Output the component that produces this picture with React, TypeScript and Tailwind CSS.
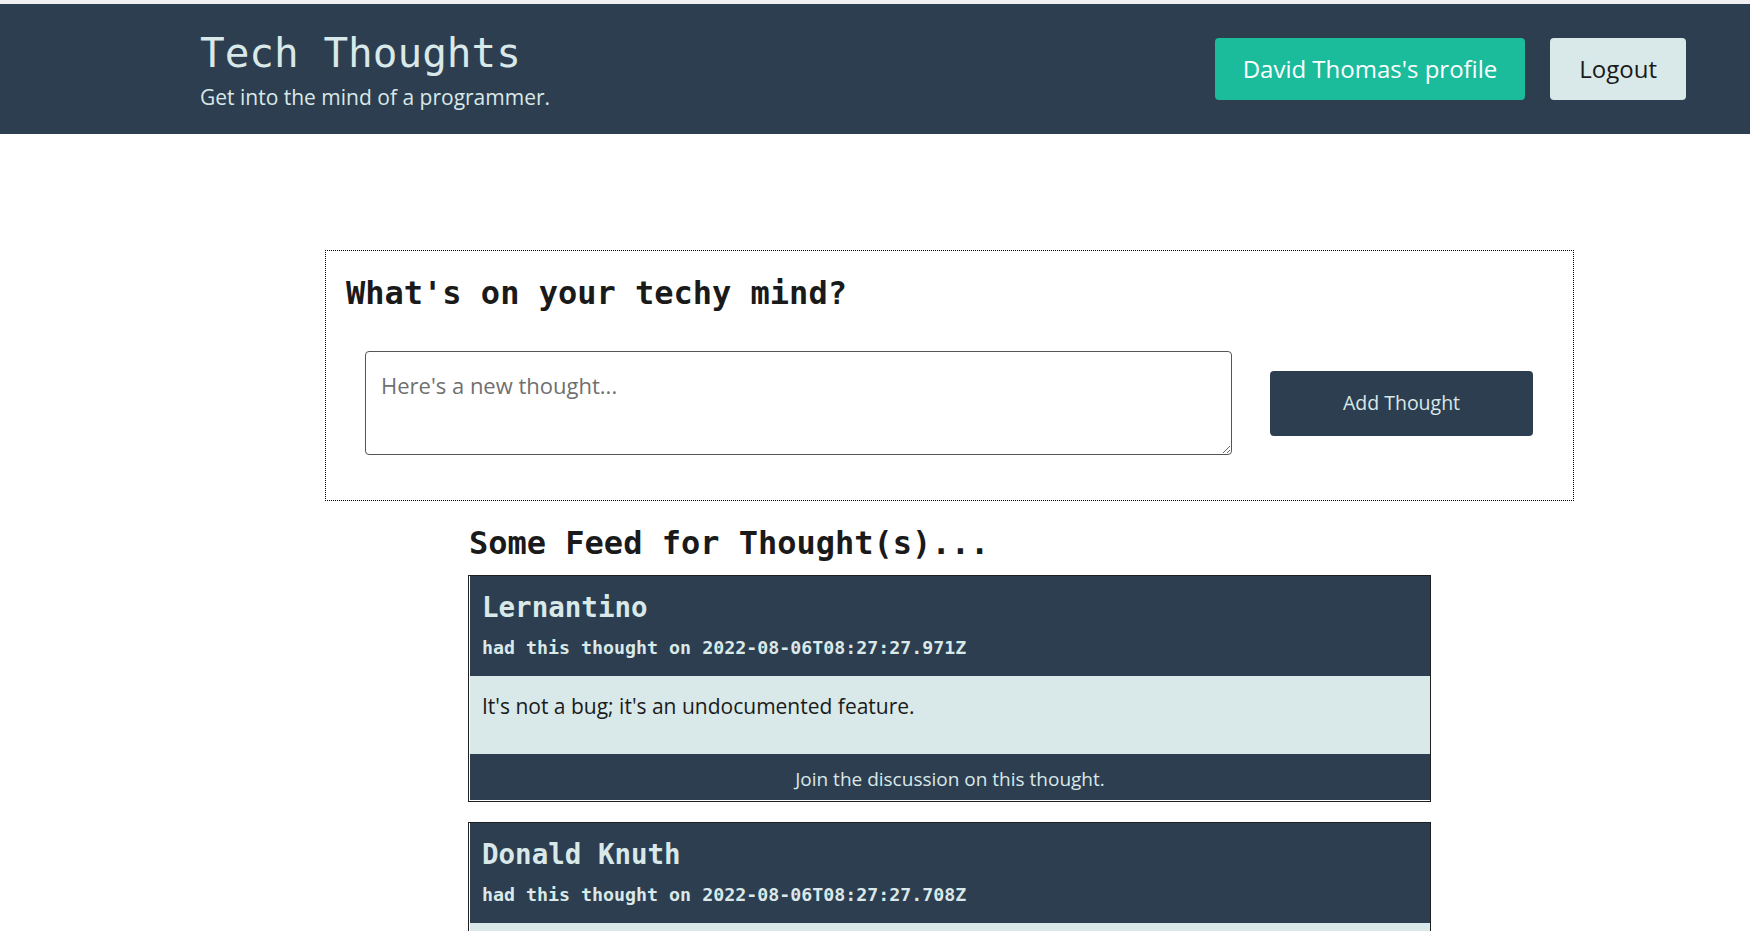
const mono = { fontFamily: '"DejaVu Sans Mono", "Liberation Mono", monospace' }

const thoughts = [
  {
    username: 'Lernantino',
    createdAt: '2022-08-06T08:27:27.971Z',
    text: "It's not a bug; it's an undocumented feature.",
  },
  {
    username: 'Donald Knuth',
    createdAt: '2022-08-06T08:27:27.708Z',
    text: 'Premature optimization is the root of all evil.',
  },
]

const Header = () => {
  return (
    <header className="h-[130px] bg-[#2d3e50] flex items-center justify-between pl-[200px] pr-[64px]">
      <div className="flex flex-col pt-[2px]">
        <h1 className="text-[41px] leading-[48px] text-[#d9e8e8]" style={mono}>
          Tech Thoughts
        </h1>
        <p className="text-[21px] leading-[28px] mt-[6px] text-[#d9e8e8]">Get into the mind of a programmer.</p>
      </div>
      <div className="flex items-center gap-[25px]">
        <button className="h-[62px] px-[28px] rounded bg-[#1abc9c] text-white text-[24px]">
          David Thomas's profile
        </button>
        <button className="h-[62px] px-[29px] rounded bg-[#d9e8e8] text-[#1a1a1a] text-[24px]">
          Logout
        </button>
      </div>
    </header>
  )
}

const ThoughtForm = () => {
  return (
    <div className="ml-[325px] w-[1249px] border border-dotted border-black pl-[20px] pr-[40px] pt-[22px] pb-[45px]">
      <h3 className="text-[32px] leading-[40px] font-bold text-[#1a1a1a]" style={mono}>
        What's on your techy mind?
      </h3>
      <div className="flex items-center mt-[38px] pl-[19px]">
        <textarea
          placeholder="Here's a new thought..."
          className="w-[867px] h-[104px] border border-[#555] rounded px-[15px] py-[18px] text-[22px] leading-[30px] text-[#222] placeholder:text-[#6f6f6f] outline-none"
        />
        <button className="ml-[38px] w-[263px] h-[65px] rounded bg-[#2d3e50] text-[#d9e8e8] text-[19.5px]">
          Add Thought
        </button>
      </div>
    </div>
  )
}

const ThoughtCard = ({ username, createdAt, text }: { username: string; createdAt: string; text: string }) => {
  return (
    <div className="w-[963px] border border-[#1f1f1f] bg-white pl-px pb-px mb-[20px]">
      <div className="bg-[#2d3e50] text-[#d9e8e8] px-3 pt-[14px] pb-4" style={mono}>
        <p className="text-[27.5px] leading-[34px] font-bold">{username}</p>
        <p className="text-[18.3px] leading-6 font-bold mt-3">had this thought on {createdAt}</p>
      </div>
      <div className="bg-[#d9e8e8] px-3 pt-[15px] pb-[33px] text-[21px] leading-[30px] text-[#1a1a1a]">{text}</div>
      <div className="bg-[#2d3e50] text-[#d9e8e8] text-center text-[19px] leading-[26px] pt-[12px] pb-[8px]">
        Join the discussion on this thought.
      </div>
    </div>
  )
}

const App = () => {
  return (
    <div className="min-h-screen bg-white" style={{ fontFamily: '"Open Sans", "Noto Sans", sans-serif' }}>
      <div className="h-1 bg-[#f0f0f0]" />
      <Header />
      <main className="pt-[116px] pb-10">
        <ThoughtForm />
        <div className="ml-[468px] mt-[22px]">
          <h3 className="text-[32px] leading-[40px] font-bold text-[#1a1a1a] pl-px mb-[12px]" style={mono}>
            Some Feed for Thought(s)...
          </h3>
          {thoughts.map((t, i) => (
            <ThoughtCard key={i} username={t.username} createdAt={t.createdAt} text={t.text} />
          ))}
        </div>
      </main>
    </div>
  )
}

export default App
